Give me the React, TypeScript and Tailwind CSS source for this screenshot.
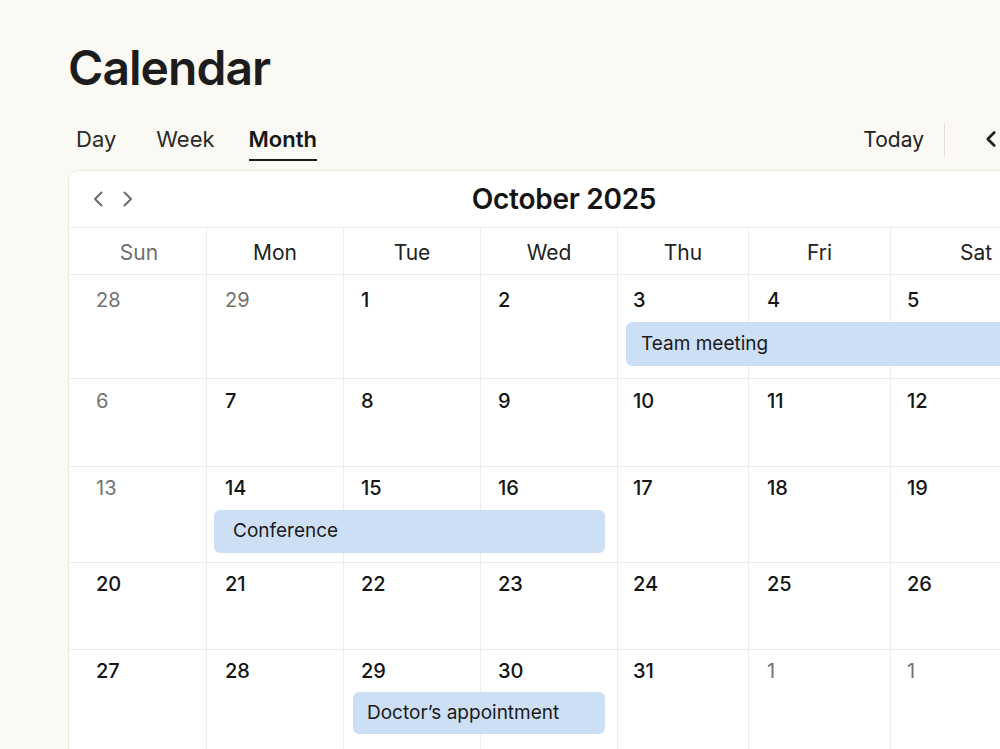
import { ChevronLeft, ChevronRight } from "lucide-react";

type Day = { n: number; muted?: boolean };
type Event = { title: string; place: string };
type Week = { days: Day[]; rows: string; pad: string; events: Event[] };

const weekdays = ["Sun", "Mon", "Tue", "Wed", "Thu", "Fri", "Sat"];

const colStart = [
  "col-start-1",
  "col-start-2",
  "col-start-3",
  "col-start-4",
  "col-start-5",
  "col-start-6",
  "col-start-7",
];

// left padding of the day number in each column
const numPad = ["pl-[27px]", "pl-[18px]", "pl-[17px]", "pl-[17px]", "pl-[15px]", "pl-[18px]", "pl-[16px]"];

const cols = "grid grid-cols-[137px_137px_137px_137px_131px_142px_171px]";

const d = (n: number, muted = false): Day => ({ n, muted });

const weeks: Week[] = [
  {
    days: [d(28, true), d(29, true), d(1), d(2), d(3), d(4), d(5)],
    rows: "grid-rows-[47px_44px_minmax(0,1fr)] h-[104px]",
    pad: "pt-[10px]",
    events: [{ title: "Team meeting", place: "col-start-5 col-span-3 ml-[9px] pl-[15px]" }],
  },
  {
    days: [d(6, true), d(7), d(8), d(9), d(10), d(11), d(12)],
    rows: "grid-rows-[44px_minmax(0,1fr)] h-[88px]",
    pad: "pt-[7px]",
    events: [],
  },
  {
    days: [d(13, true), d(14), d(15), d(16), d(17), d(18), d(19)],
    rows: "grid-rows-[43px_43px_minmax(0,1fr)] h-[96px]",
    pad: "pt-[6px]",
    events: [{ title: "Conference", place: "col-start-2 col-span-3 ml-[8px] mr-[12px] pl-[19px]" }],
  },
  {
    days: [d(20), d(21), d(22), d(23), d(24), d(25), d(26)],
    rows: "grid-rows-[44px_minmax(0,1fr)] h-[87px]",
    pad: "pt-[6px]",
    events: [],
  },
  {
    days: [d(27), d(28), d(29), d(30), d(31), d(1, true), d(1, true)],
    rows: "grid-rows-[42px_42px_minmax(0,1fr)] h-[110px]",
    pad: "pt-[6px]",
    events: [{ title: "Doctor’s appointment", place: "col-start-3 col-span-2 ml-[10px] mr-[12px] pl-[14px]" }],
  },
];

function Chevron({ dir }: { dir: "left" | "right" }) {
  return (
    <svg width="12" height="16" viewBox="0 0 12 16" fill="none" stroke="currentColor" strokeWidth="2" strokeLinecap="round" strokeLinejoin="round">
      <path d={dir === "left" ? "M9.5 1.5 3 8l6.5 6.5" : "M2.5 1.5 9 8l-6.5 6.5"} />
    </svg>
  );
}

export default function App() {
  return (
    <div className="h-screen w-screen overflow-hidden bg-[#faf9f4] font-['Inter','Liberation_Sans',sans-serif] text-[#1a1a1a]">
      <div className="w-[992px] ml-[68px] pt-[38px]">
        <h1 className="text-[48px] leading-[60px] font-semibold tracking-[-0.02em] text-[#1c1c1c]">
          Calendar
        </h1>

        {/* View switcher + navigation */}
        <div className="mt-[19px] flex items-center justify-between">
          <div className="flex items-center gap-[34px] pl-[8px] text-[22px]">
            <button className="h-[44px] text-[#2a2a2a]">Day</button>
            <button className="h-[44px] ml-[6px] text-[#2a2a2a]">Week</button>
            <button className="h-[44px] font-semibold text-[#161616] border-b-2 border-[#1c1c1c] pt-[2px]">
              Month
            </button>
          </div>
          <div className="mr-[6px] flex items-center text-[21px] text-[#222]">
            <button className="px-[20px] pt-[1px]">Today</button>
            <div className="w-px h-[33px] bg-[#e2dfd8]" />
            <button className="pl-[33px] pr-2 text-[#222]">
              <ChevronLeft size={26} strokeWidth={2.5} />
            </button>
            <button className="px-2 text-[#222]">
              <ChevronRight size={26} strokeWidth={2.5} />
            </button>
          </div>
        </div>

        {/* Month grid */}
        <div className="mt-[9px] rounded-[10px] border border-[#ece9e3] bg-white">
          <div className="relative flex h-[56px] items-center">
            <div className="flex items-center gap-[18px] pl-[23px] text-[#6b6b6b]">
              <Chevron dir="left" />
              <Chevron dir="right" />
            </div>
            <h2 className="absolute left-0 right-0 text-center text-[28px] font-semibold tracking-[-0.01em] text-[#141414] pointer-events-none">
              October 2025
            </h2>
          </div>

          <div className={`${cols} h-[47px] border-t border-[#efece7]`}>
            {weekdays.map((w, i) => (
              <div
                key={w}
                className={`flex items-center justify-center pt-[4px] text-[21px] ${
                  i === 0 ? "text-[#6e6e6e] pl-[3px]" : "border-l border-[#efece7] text-[#222]"
                }`}
              >
                {w}
              </div>
            ))}
          </div>

          {weeks.map((week, wi) => (
            <div key={wi} className={`${cols} ${week.rows} border-t border-[#efece7]`}>
              {week.days.map((day, i) => (
                <div
                  key={i}
                  className={`${colStart[i]} row-start-1 row-span-full ${week.pad} ${numPad[i]} text-[20px] ${
                    i === 0 ? "" : "border-l border-[#efece7]"
                  } ${day.muted ? "text-[#727272]" : "font-medium text-[#151515]"}`}
                >
                  {day.n}
                </div>
              ))}
              {week.events.map((ev) => (
                <div
                  key={ev.title}
                  className={`${ev.place} row-start-2 flex items-center rounded-md bg-[#cddff5] text-[19px] text-[#1a1a1a]`}
                >
                  {ev.title}
                </div>
              ))}
            </div>
          ))}
        </div>
      </div>
    </div>
  );
}
